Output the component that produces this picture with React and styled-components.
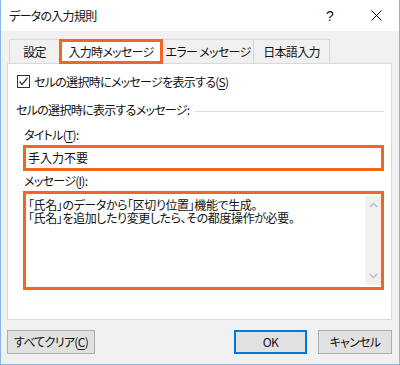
import React from "react";
import styled, { createGlobalStyle } from "styled-components";

const ORANGE = "#f26522";

const GlobalStyle = createGlobalStyle`
  body {
    margin: 0;
    background: #ffffff;
  }
  * {
    box-sizing: border-box;
  }
`;

const Window = styled.div`
  width: 400px;
  height: 365px;
  display: flex;
  flex-direction: column;
  border: 1px solid #86b5e6;
  border-top: none;
  font-family: "Noto Sans CJK JP", "Noto Sans", sans-serif;
  font-feature-settings: "palt";
  font-size: 12px;
  letter-spacing: -0.7px;
  color: #111;
`;

const TitleBar = styled.div`
  height: 31px;
  display: flex;
  align-items: center;
  background: #ffffff;
`;

const Caption = styled.div`
  flex: 1;
  padding-left: 8px;
  font-size: 12px;
  line-height: 16px;
`;

const TitleButton = styled.div`
  width: 46px;
  height: 31px;
  display: flex;
  align-items: center;
  justify-content: center;
  font-family: "Liberation Sans", Arial, sans-serif;
  font-size: 14px;
  letter-spacing: 0;
`;

const Body = styled.div`
  flex: 1;
  display: flex;
  flex-direction: column;
  background: #f0f0f0;
  padding: 8px 7px 0 6px;
`;

const TabRow = styled.div`
  height: 24px;
  display: flex;
  align-items: flex-end;
  padding-left: 2px;
`;

const Tab = styled.div`
  width: ${(p) => p.$w}px;
  height: ${(p) => (p.$active ? 25 : 24)}px;
  margin-bottom: ${(p) => (p.$active ? -1 : 0)}px;
  margin-left: -1px;
  &:first-child {
    margin-left: 0;
  }
  display: flex;
  align-items: center;
  justify-content: center;
  position: relative;
  z-index: ${(p) => (p.$active ? 1 : 0)};
  background: ${(p) => (p.$active ? "#ffffff" : "#f0f0f0")};
  border: ${(p) => (p.$active ? `3px solid ${ORANGE}` : "1px solid #d9d9d9")};
  border-bottom: ${(p) => (p.$active ? `3px solid ${ORANGE}` : "none")};
  line-height: 16px;
  white-space: pre;
`;

const Panel = styled.div`
  height: 257px;
  display: flex;
  flex-direction: column;
  background: #ffffff;
  border: 1px solid #d9d9d9;
  padding: 11px 7px 0 9px;
`;

const CheckRow = styled.div`
  height: 13px;
  display: flex;
  align-items: center;
  gap: 4px;
  line-height: 16px;
`;

const CheckBox = styled.div`
  width: 13px;
  height: 13px;
  border: 1px solid #333333;
  background: #ffffff;
  display: flex;
  align-items: center;
  justify-content: center;
`;

const U = styled.span`
  text-decoration: underline;
  text-underline-offset: 2px;
`;

const GroupHeader = styled.div`
  height: 16px;
  margin-top: 14px;
  margin-left: -1px;
  display: flex;
  align-items: center;
  line-height: 16px;
`;

const Rule = styled.div`
  flex: 1;
  height: 1px;
  margin: 3px 0 0 5px;
  background: #dcdcdc;
`;

const Fields = styled.div`
  margin-left: 6px;
  display: flex;
  flex-direction: column;
`;

const FieldLabel = styled.div`
  height: 16px;
  line-height: 16px;
  margin: ${(p) => p.$top}px 0 2px 1px;
`;

const TitleInput = styled.div`
  height: 26px;
  display: flex;
  align-items: center;
  border: 3px solid ${ORANGE};
  padding: 0 2px;
  line-height: 16px;
  letter-spacing: 0;
`;

const MessageBox = styled.div`
  height: 99px;
  display: flex;
  border: 3px solid ${ORANGE};
`;

const MessageText = styled.div`
  flex: 1;
  padding: 4px 2px;
  line-height: 13px;
  white-space: pre;
  letter-spacing: -0.4px;
`;

const ScrollBar = styled.div`
  width: 16px;
  margin: 2px 0;
  padding: 6px 0;
  background: #f0f0f0;
  display: flex;
  flex-direction: column;
  justify-content: space-between;
  align-items: center;
`;

const ButtonRow = styled.div`
  margin-top: 10px;
  display: flex;
  gap: 11px;
`;

const Button = styled.div`
  width: ${(p) => p.$w}px;
  height: 24px;
  display: flex;
  align-items: center;
  justify-content: center;
  background: #e1e1e1;
  border: ${(p) => (p.$primary ? "2px solid #0078d7" : "1px solid #adadad")};
  line-height: 16px;
`;

const Spacer = styled.div`
  flex: 1;
`;

function Chevron({ down }) {
  return (
    <svg width="9" height="6" viewBox="0 0 9 6">
      <polyline
        points={down ? "1,1 4.5,4.5 8,1" : "1,5 4.5,1.5 8,5"}
        fill="none"
        stroke="#c2c2c2"
        strokeWidth="1.6"
      />
    </svg>
  );
}

export default function App() {
  return (
    <>
      <GlobalStyle />
      <Window>
        <TitleBar>
          <Caption>データの入力規則</Caption>
          <TitleButton>?</TitleButton>
          <TitleButton>
            <svg width="11" height="11" viewBox="0 0 11 11">
              <path d="M0.5 0.5 L10.5 10.5 M10.5 0.5 L0.5 10.5" stroke="#000" strokeWidth="1" />
            </svg>
          </TitleButton>
        </TitleBar>
        <Body>
          <TabRow>
            <Tab $w={51}>設定</Tab>
            <Tab $w={104} $active>入力時メッセージ</Tab>
            <Tab $w={92}>エラー メッセージ</Tab>
            <Tab $w={77}>日本語入力</Tab>
          </TabRow>
          <Panel>
            <CheckRow>
              <CheckBox>
                <svg width="11" height="11" viewBox="0 0 11 11">
                  <polyline points="1.5,5.5 4,8.5 9.5,2" fill="none" stroke="#333" strokeWidth="1.2" />
                </svg>
              </CheckBox>
              <span>
                セルの選択時にメッセージを表示する(<U>S</U>)
              </span>
            </CheckRow>
            <GroupHeader>
              <span>セルの選択時に表示するメッセージ:</span>
              <Rule />
            </GroupHeader>
            <Fields>
              <FieldLabel $top={9}>
                タイトル(<U>T</U>):
              </FieldLabel>
              <TitleInput>手入力不要</TitleInput>
              <FieldLabel $top={2}>
                メッセージ(<U>I</U>):
              </FieldLabel>
              <MessageBox>
                <MessageText>
                  {"「氏名」のデータから「区切り位置」機能で生成。\n「氏名」を追加したり変更したら、その都度操作が必要。"}
                </MessageText>
                <ScrollBar>
                  <Chevron />
                  <Chevron down />
                </ScrollBar>
              </MessageBox>
            </Fields>
          </Panel>
          <ButtonRow>
            <Button $w={88}>
              すべてクリア(<U>C</U>)
            </Button>
            <Spacer />
            <Button $w={73} $primary>
              OK
            </Button>
            <Button $w={74}>キャンセル</Button>
          </ButtonRow>
        </Body>
      </Window>
    </>
  );
}
